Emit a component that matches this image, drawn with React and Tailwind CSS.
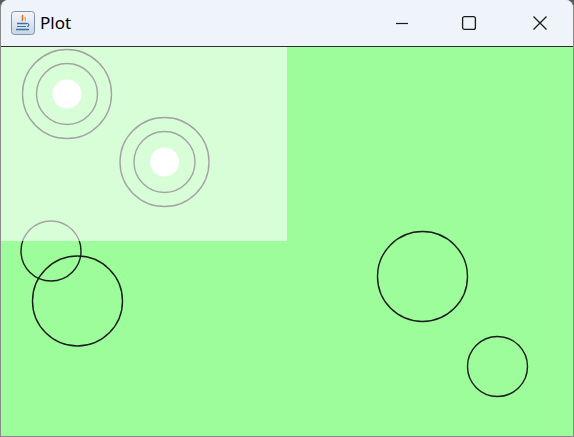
import React from "react";

// Java-style "Plot" window: title bar + drawing canvas
const rings = [
  { cx: 67, cy: 94 },
  { cx: 164.5, cy: 162 },
];

const outlines = [
  { cx: 51, cy: 251, r: 30 },
  { cx: 77.5, cy: 301, r: 45 },
  { cx: 422.5, cy: 276.5, r: 45 },
  { cx: 497.5, cy: 366.5, r: 30 },
];

function JavaIcon() {
  return (
    <svg width="24" height="24" viewBox="0 0 24 24">
      <defs>
        <linearGradient id="jbg" x1="0" y1="0" x2="0" y2="1">
          <stop offset="0" stopColor="#f4f7fb" />
          <stop offset="1" stopColor="#c9d6e6" />
        </linearGradient>
      </defs>
      <rect x="0.5" y="0.5" width="23" height="23" rx="3" fill="url(#jbg)" stroke="#7f93ad" />
      <path d="M12 4c-2 2 1 3 -1 6" stroke="#e76f1a" strokeWidth="1.6" fill="none" />
      <path d="M14.5 6c-1.5 1.5 1 2 -0.5 4" stroke="#f29b3a" strokeWidth="1.2" fill="none" />
      <path d="M6 12.5h10" stroke="#3b6ea5" strokeWidth="1.4" />
      <path d="M16 12.5c2.5 0 2.5 3 0 3" stroke="#3b6ea5" strokeWidth="1.2" fill="none" />
      <path d="M6 15.5h9" stroke="#3b6ea5" strokeWidth="1.2" />
      <path d="M5 18.5h13" stroke="#3b6ea5" strokeWidth="1.4" />
    </svg>
  );
}

function TitleBar() {
  return (
    <div className="flex h-[47px] items-center bg-[#eff3fa] border-b border-[#2f2f2f]">
      <div className="ml-[10px] flex items-center">
        <JavaIcon />
        <span
          className="ml-[5px] text-[17px] text-black"
          style={{ fontFamily: '"Noto Sans", "Open Sans", sans-serif' }}
        >
          Plot
        </span>
      </div>
      <div className="ml-auto flex h-full items-center">
        <div className="flex h-full w-[58px] items-center justify-center">
          <svg width="16" height="16" viewBox="0 0 16 16">
            <path d="M2 8.5h12" stroke="#1a1a1a" strokeWidth="1.2" />
          </svg>
        </div>
        <div className="flex h-full w-[76px] items-center justify-center">
          <svg width="16" height="16" viewBox="0 0 16 16">
            <rect x="1.6" y="1.6" width="12.8" height="12.8" rx="2" fill="none" stroke="#1a1a1a" strokeWidth="1.3" />
          </svg>
        </div>
        <div className="flex h-full w-[66px] items-center justify-center">
          <svg width="16" height="16" viewBox="0 0 16 16">
            <path d="M1.5 1.5l13 13M14.5 1.5l-13 13" stroke="#1a1a1a" strokeWidth="1.3" />
          </svg>
        </div>
      </div>
    </div>
  );
}

function Canvas() {
  return (
    <svg width="572" height="388" viewBox="1 47 572 388" className="block">
      <rect x="1" y="47" width="572" height="388" fill="#9dfd9b" />
      {outlines.map((c, i) => (
        <circle key={i} cx={c.cx} cy={c.cy} r={c.r} fill="none" stroke="#1b1b1b" strokeWidth="1.4" />
      ))}
      {rings.map((c, i) => (
        <g key={i}>
          <circle cx={c.cx} cy={c.cy} r="44.5" fill="none" stroke="#1b1b1b" strokeWidth="1.4" />
          <circle cx={c.cx} cy={c.cy} r="30.5" fill="none" stroke="#1b1b1b" strokeWidth="1.4" />
          <circle cx={c.cx} cy={c.cy} r="14.5" fill="#ffffff" />
        </g>
      ))}
      <rect x="1" y="47" width="286" height="194" fill="#ffffff" fillOpacity="0.6" />
    </svg>
  );
}

export default function App() {
  return (
    <div className="w-[574px] h-[437px] overflow-hidden bg-[#5a5a5a]">
      <div className="h-[437px] rounded-tr-[8px] rounded-tl-[8px] overflow-hidden border-x border-b border-[#8a8a8a] bg-[#9dfd9b]">
        <TitleBar />
        <Canvas />
      </div>
    </div>
  );
}
